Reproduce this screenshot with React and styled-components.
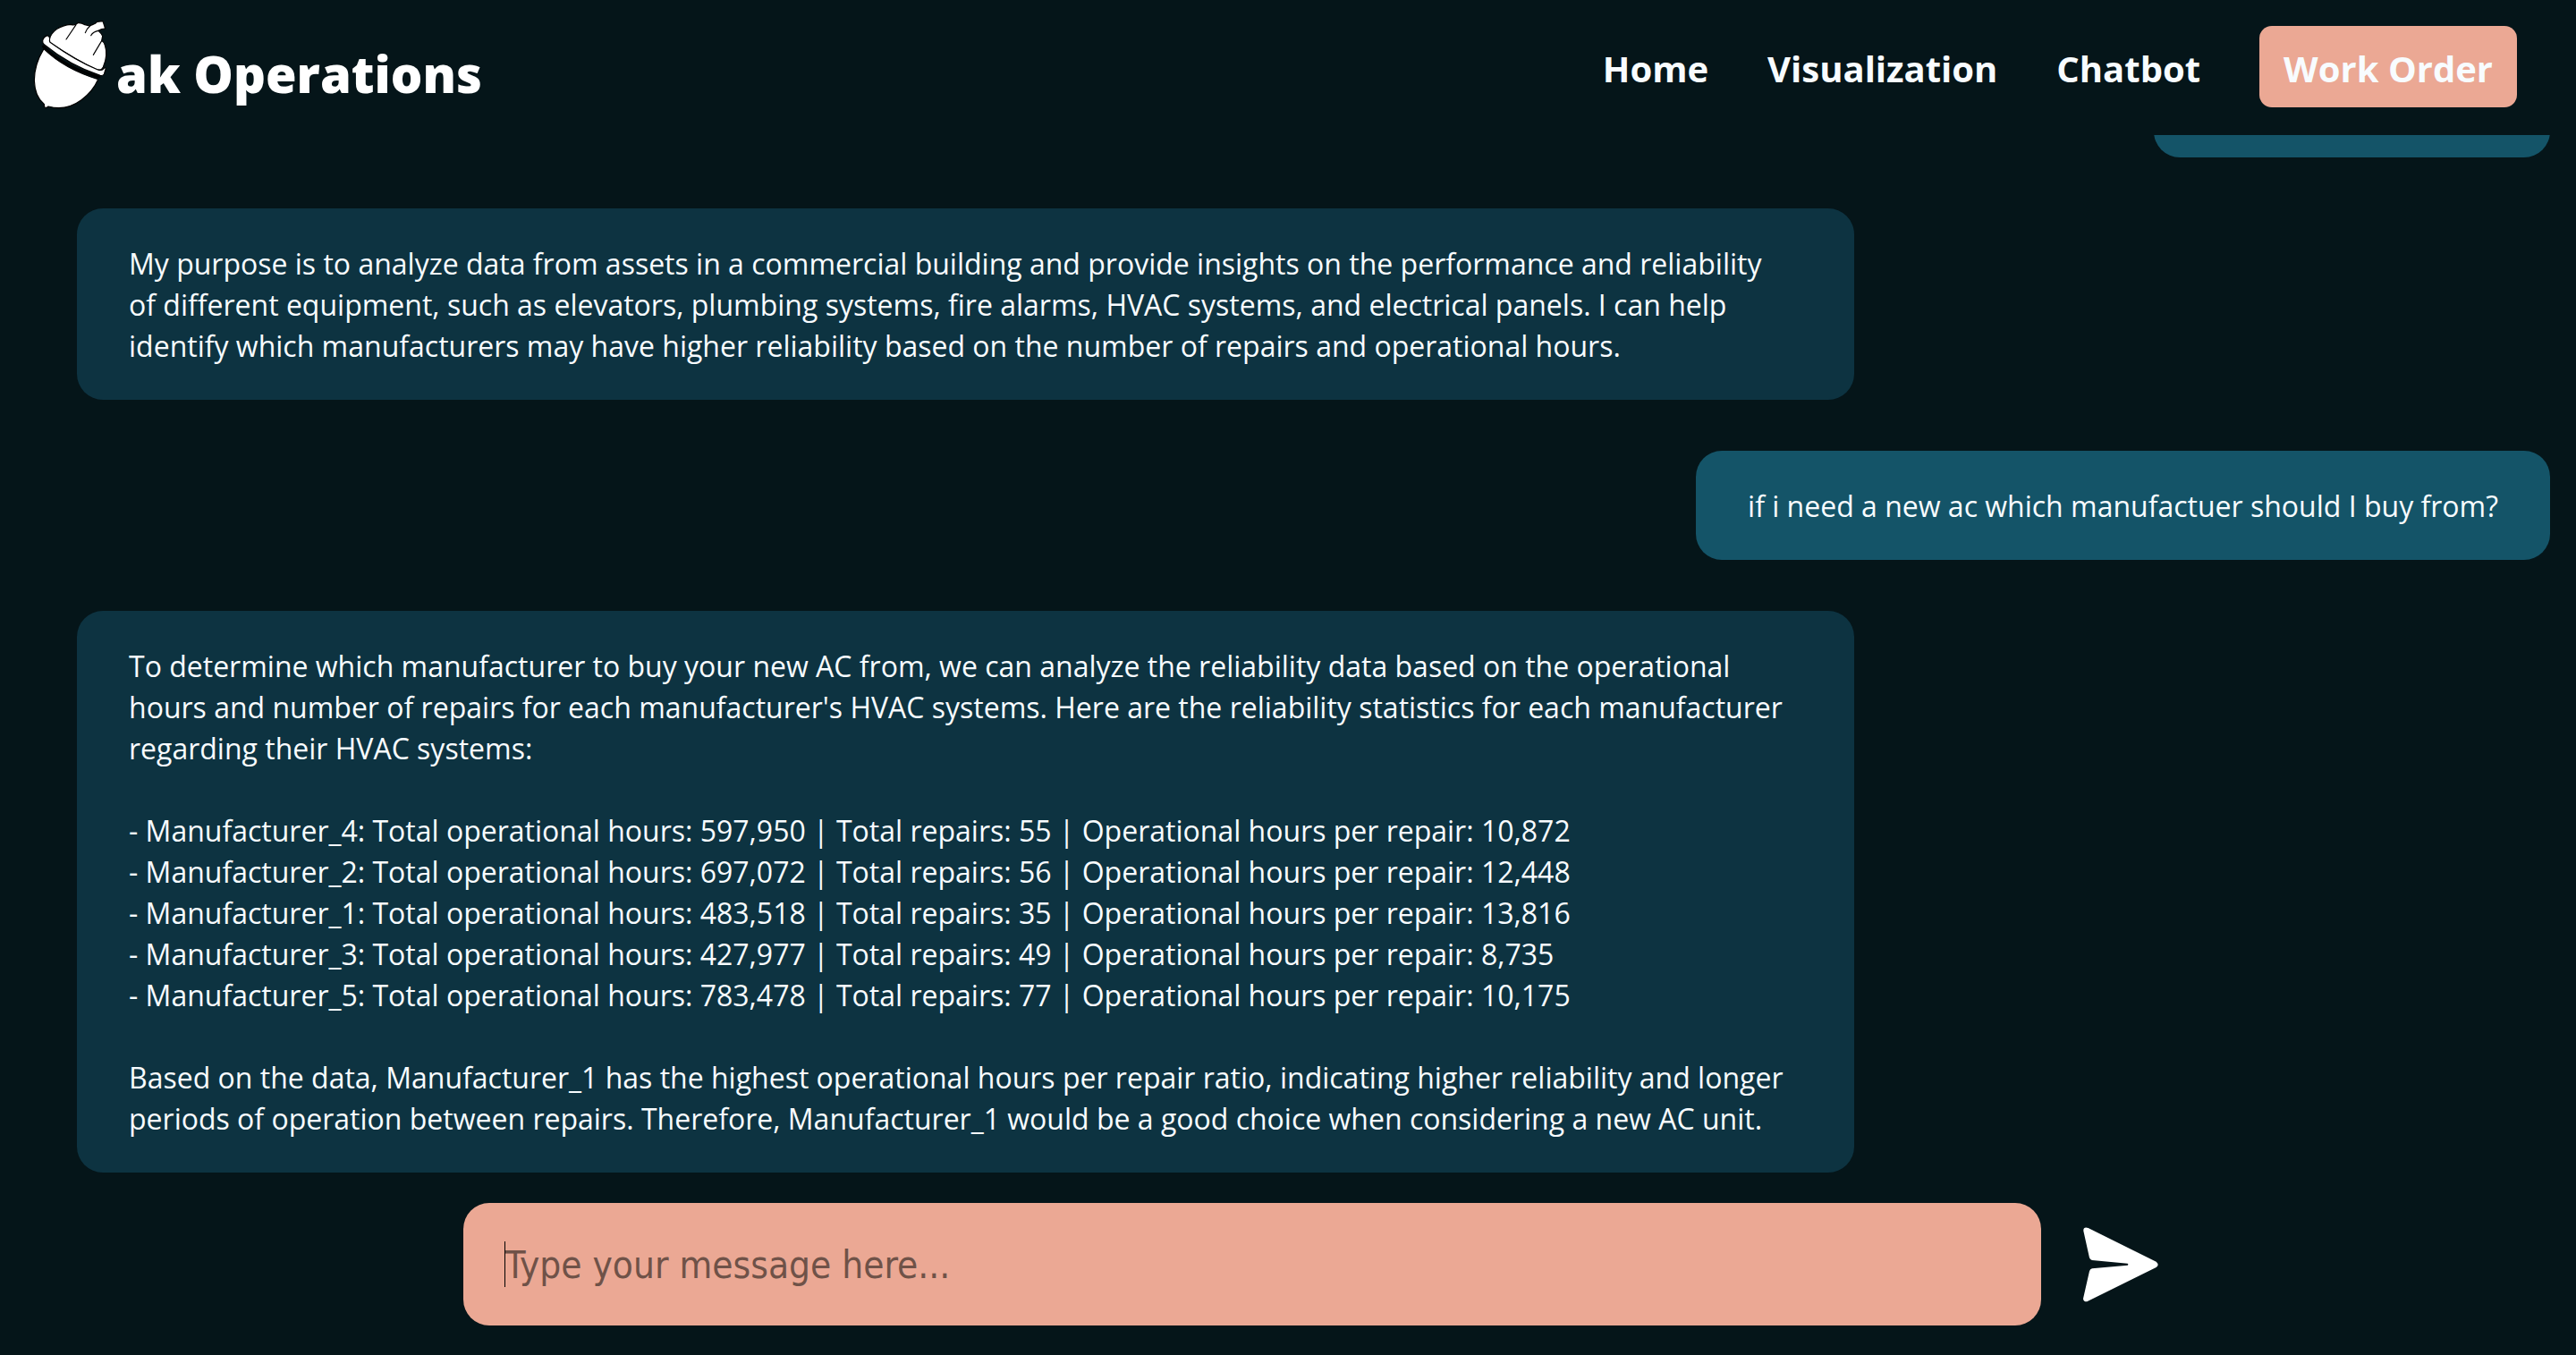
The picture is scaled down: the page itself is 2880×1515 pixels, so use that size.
import React, { useState } from "react";
import styled, { createGlobalStyle, css } from "styled-components";

const GlobalStyle = createGlobalStyle`
  *, *::before, *::after { box-sizing: border-box; }
  body {
    margin: 0;
    background: #051519;
    color: #f8fcff;
    font-family: "Open Sans", "Noto Sans", sans-serif;
  }
`;

const Page = styled.div`
  display: flex;
  flex-direction: column;
  height: 100vh;
`;

const Header = styled.header`
  flex: none;
  display: flex;
  align-items: flex-start;
  justify-content: space-between;
  height: 151px;
  padding: 0 66px 0 36px;
`;

const Brand = styled.a`
  display: flex;
  align-items: flex-start;
  gap: 8px;
  padding-top: 22px;
  color: #fff;
  font-size: 56px;
  font-weight: 800;
  line-height: 76px;
  text-decoration: none;
`;

const BrandName = styled.span`
  padding-top: 22px;
`;

const Nav = styled.nav`
  display: flex;
  gap: 66px;
  padding-top: 29px;
`;

const NavLink = styled.a`
  padding: 19px 0 14px;
  color: inherit;
  font-size: 40px;
  font-weight: 700;
  line-height: 58px;
  text-decoration: none;
  ${(p) =>
    p.$filled &&
    css`
      padding-left: 27px;
      padding-right: 27px;
      border-radius: 14px;
      background: #eba894;
    `}
`;

const Messages = styled.main`
  flex: 1;
  min-height: 0;
  overflow: hidden;
  display: flex;
  flex-direction: column;
  justify-content: flex-end;
  gap: 57px;
  padding: 0 29px 0 86px;
`;

const Bubble = styled.div`
  flex: none;
  align-self: ${(p) => (p.$own ? "flex-end" : "flex-start")};
  max-width: 69vw;
  min-width: 443px;
  min-height: 122px;
  padding: 39px ${(p) => (p.$own ? "58px" : "72px")} 37px 58px;
  border-radius: 29px;
  background: ${(p) => (p.$own ? "#145468" : "#0d3341")};
  font-size: 32px;
  line-height: 46px;
  white-space: pre-wrap;
`;

const Composer = styled.form`
  flex: none;
  display: flex;
  align-items: center;
  gap: 47px;
  padding: 34px 16% 33px 18%;
`;

const Field = styled.div`
  position: relative;
  flex: 1;
`;

const Input = styled.input`
  display: block;
  width: 100%;
  height: 137px;
  padding: 2px 46px 0;
  border: 0;
  border-radius: 29px;
  outline: 0;
  background: #eba894;
  color: #051519;
  font-family: "DejaVu Sans Condensed", "DejaVu Sans", sans-serif;
  font-size: 42px;
  caret-color: transparent;
  &::placeholder { color: #6f5248; opacity: 1; }
`;

const Caret = styled.span`
  position: absolute;
  left: 46px;
  top: 43px;
  width: 1px;
  height: 51px;
  background: #000;
`;

const SendButton = styled.button`
  display: flex;
  width: 90px;
  padding: 0;
  border: 0;
  background: none;
  color: #fff;
  cursor: pointer;
`;

function Acorn() {
  return (
    <svg width="86" height="102" viewBox="48 36 258 306" aria-hidden="true">
      <g fill="#fff" stroke="#000" strokeWidth="3.5" strokeLinejoin="round" strokeLinecap="round">
        <path d="M87 134C66 168 55 205 55 240C56 275 69 304 88 319L89 329Q95 334 102 327C140 337 181 329 213 305C240 285 259 259 269 236C200 215 136 182 87 134Z" />
        <path d="M85 126C130 170 196 207 272 228" fill="none" strokeWidth="9" />
        <path d="M106 101C113 75 140 55 178 52Q187 55 194 52L201 47Q214 46 222 52L240 57C249 52 261 52 266 43L285 41L293 66Q282 65 270 73Q281 83 284 91L281 106Q290 112 292 122C299 143 297 170 286 195L280 203Q272 206 260 201C205 176 156 145 108 113Q104 109 106 101Z" />
        <path d="M100 89Q87 92 83 106Q82 115 89 120C144 165 209 201 276 223Q285 225 289 219L295 199Q290 196 287 201Q281 208 268 204C208 180 155 146 108 112Q105 108 107 96Z" />
        <path d="M195 53L162 102M281 107L253 154M242 57Q230 67 226 80M270 73Q252 76 245 89" fill="none" />
      </g>
    </svg>
  );
}

function SendIcon() {
  return (
    <svg width="84" height="84" viewBox="389 276 252 252" aria-hidden="true">
      <path
        fill="currentColor"
        d="M402 278Q389 276 390 289L410 379Q412 386 419 387L538 398Q542 401 538 404L419 415Q412 416 410 424L389 516Q390 527 402 526L634 411Q646 402 634 392L406 279Z"
      />
    </svg>
  );
}

const messages = [
  { own: true, text: "" },
  {
    text: "My purpose is to analyze data from assets in a commercial building and provide insights on the performance and reliability of different equipment, such as elevators, plumbing systems, fire alarms, HVAC systems, and electrical panels. I can help identify which manufacturers may have higher reliability based on the number of repairs and operational hours.",
  },
  { own: true, text: "if i need a new ac which manufactuer should I buy from?" },
  {
    text: `To determine which manufacturer to buy your new AC from, we can analyze the reliability data based on the operational hours and number of repairs for each manufacturer's HVAC systems. Here are the reliability statistics for each manufacturer regarding their HVAC systems:

- Manufacturer_4: Total operational hours: 597,950 | Total repairs: 55 | Operational hours per repair: 10,872
- Manufacturer_2: Total operational hours: 697,072 | Total repairs: 56 | Operational hours per repair: 12,448
- Manufacturer_1: Total operational hours: 483,518 | Total repairs: 35 | Operational hours per repair: 13,816
- Manufacturer_3: Total operational hours: 427,977 | Total repairs: 49 | Operational hours per repair: 8,735
- Manufacturer_5: Total operational hours: 783,478 | Total repairs: 77 | Operational hours per repair: 10,175

Based on the data, Manufacturer_1 has the highest operational hours per repair ratio, indicating higher reliability and longer periods of operation between repairs. Therefore, Manufacturer_1 would be a good choice when considering a new AC unit.`,
  },
];

export default function App() {
  const [draft, setDraft] = useState("");
  return (
    <Page>
      <GlobalStyle />
      <Header>
        <Brand href="#">
          <Acorn />
          <BrandName>ak Operations</BrandName>
        </Brand>
        <Nav>
          <NavLink href="#home">Home</NavLink>
          <NavLink href="#visualization">Visualization</NavLink>
          <NavLink href="#chatbot">Chatbot</NavLink>
          <NavLink href="#work-order" $filled>Work Order</NavLink>
        </Nav>
      </Header>
      <Messages>
        {messages.map((m, i) => (
          <Bubble key={i} $own={m.own}>{m.text}</Bubble>
        ))}
      </Messages>
      <Composer onSubmit={(e) => e.preventDefault()}>
        <Field>
          <Input
            aria-label="Message"
            placeholder="Type your message here..."
            value={draft}
            onChange={(e) => setDraft(e.target.value)}
          />
          {draft === "" && <Caret />}
        </Field>
        <SendButton type="submit" aria-label="Send">
          <SendIcon />
        </SendButton>
      </Composer>
    </Page>
  );
}
